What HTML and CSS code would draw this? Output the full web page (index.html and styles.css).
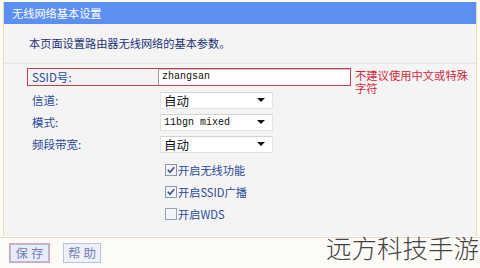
FILE: index.html
```html
<!DOCTYPE html>
<html>
<head>
<meta charset="utf-8">
<link rel="stylesheet" href="styles.css">
</head>
<body>
<div class="panel">
  <div class="title">无线网络基本设置</div>
  <div class="content">
    <div class="desc">本页面设置路由器无线网络的基本参数。</div>
    <div class="form">
      <div class="row ssid-row">
        <div class="ssid-box">
          <span class="label label-in">SSID号:</span>
          <span class="input mono">zhangsan</span>
        </div>
        <div class="hint">不建议使用中文或特殊字符</div>
      </div>
      <div class="row">
        <span class="label">信道:</span>
        <span class="select"><span>自动</span><i class="arrow"></i></span>
      </div>
      <div class="row">
        <span class="label">模式:</span>
        <span class="select"><span class="mono">11bgn mixed</span><i class="arrow"></i></span>
      </div>
      <div class="row">
        <span class="label">频段带宽:</span>
        <span class="select"><span>自动</span><i class="arrow"></i></span>
      </div>
      <div class="checks">
        <div class="check">
          <svg class="cb" width="12" height="12" viewBox="0 0 12 12"><rect x="0.5" y="0.5" width="11" height="11" fill="#f3f4f8" stroke="#8b97ad"/><path d="M2.8 5.8 L5 8.2 L9.2 3.2" fill="none" stroke="#3a4f86" stroke-width="1.6"/></svg>
          <span>开启无线功能</span>
        </div>
        <div class="check">
          <svg class="cb" width="12" height="12" viewBox="0 0 12 12"><rect x="0.5" y="0.5" width="11" height="11" fill="#f3f4f8" stroke="#8b97ad"/><path d="M2.8 5.8 L5 8.2 L9.2 3.2" fill="none" stroke="#3a4f86" stroke-width="1.6"/></svg>
          <span>开启SSID广播</span>
        </div>
        <div class="check">
          <svg class="cb" width="12" height="12" viewBox="0 0 12 12"><rect x="0.5" y="0.5" width="11" height="11" fill="#f3f4f8" stroke="#9aa3b5"/></svg>
          <span>开启WDS</span>
        </div>
      </div>
    </div>
  </div>
</div>
<div class="footer">
  <span class="btn btn-save">保 存</span>
  <span class="btn">帮 助</span>
</div>
<div class="watermark">远方科技手游</div>
</body>
</html>
```
FILE: styles.css
```css
html, body {
  margin: 0;
  padding: 0;
}
body {
  width: 480px;
  height: 268px;
  overflow: hidden;
  background: #fcfbf7;
  font-family: "Noto Sans CJK SC", "Liberation Sans", sans-serif;
  position: relative;
}
.panel {
  margin: 2px 3px 0 3px;
  border-left: 1px solid #eadba9;
  border-right: 1px solid #eadba9;
}
.title {
  height: 22px;
  line-height: 22px;
  background: #5d8ff3;
  color: #fff;
  font-size: 11.2px;
  padding-left: 8px;
}
.content {
  background: #f4f4f4;
  height: 212px;
  box-sizing: border-box;
}
.desc {
  height: 40px;
  box-sizing: border-box;
  padding: 12px 0 0 25px;
  line-height: 14px;
  font-size: 11.2px;
  color: #1d3277;
  border-bottom: 1px solid #e4e6ee;
}
.form {
  padding-top: 4px;
}
.row {
  height: 22px;
  display: flex;
  align-items: center;
  padding-left: 28px;
}
.label {
  width: 128px;
  font-size: 11.5px;
  color: #2a4a9a;
  flex: none;
}
.ssid-row {
  height: 18px;
  padding-left: 23px;
  align-items: flex-start;
  margin-bottom: 3px;
}
.ssid-box {
  display: flex;
  align-items: center;
  width: 324px;
  height: 18px;
  box-sizing: border-box;
  border: 1px solid #c24050;
  flex: none;
}
.label-in {
  width: 126px;
  padding-left: 4px;
}
.input {
  width: 191px;
  height: 16px;
  box-sizing: border-box;
  background: #fff;
  border-left: 1px solid #9a9a9a;
  border-top: 1px solid #c8c8c8;
  padding-left: 3px;
  line-height: 14px;
  color: #222;
}
.mono {
  font-family: "Liberation Mono", monospace;
  font-size: 10px;
  color: #111;
}
.hint {
  width: 118px;
  margin-left: 4px;
  font-size: 11.3px;
  line-height: 13px;
  color: #d0283a;
  padding-top: 1px;
}
.select {
  width: 113px;
  height: 17px;
  box-sizing: border-box;
  background: #fff;
  border: 1px solid #e2e2e2;
  border-top-color: #d4d4d4;
  display: flex;
  align-items: center;
  justify-content: space-between;
  padding: 0 7px 0 3px;
  font-size: 12.5px;
  color: #111;
}
.arrow {
  width: 0;
  height: 0;
  border-left: 4px solid transparent;
  border-right: 4px solid transparent;
  border-top: 4px solid #111;
}
.checks {
  margin-top: 4px;
}
.check {
  height: 22px;
  display: flex;
  align-items: center;
  padding-left: 161px;
  font-size: 11.2px;
  color: #2a4a9a;
}
.cb {
  flex: none;
  margin-right: 1px;
}
.footer {
  margin-top: 1px;
  border-top: 1px solid #eedcd0;
  padding: 5px 0 0 9px;
  display: flex;
  gap: 13px;
}
.btn {
  width: 38px;
  height: 20px;
  box-sizing: border-box;
  border: 1px solid #b8c0e4;
  background: #eef0fa;
  color: #7282ae;
  font-size: 12.5px;
  line-height: 18px;
  text-align: center;
}
.btn-save {
  width: 41px;
  border-color: #e0a2ab;
  box-shadow: inset 0 0 0 1px #b4bde0;
  background: #e9ecf8;
}
.watermark {
  position: absolute;
  left: 326px;
  top: 231px;
  font-size: 25.5px;
  line-height: 32px;
  color: #444;
  font-weight: 200;
  white-space: nowrap;
}
```
